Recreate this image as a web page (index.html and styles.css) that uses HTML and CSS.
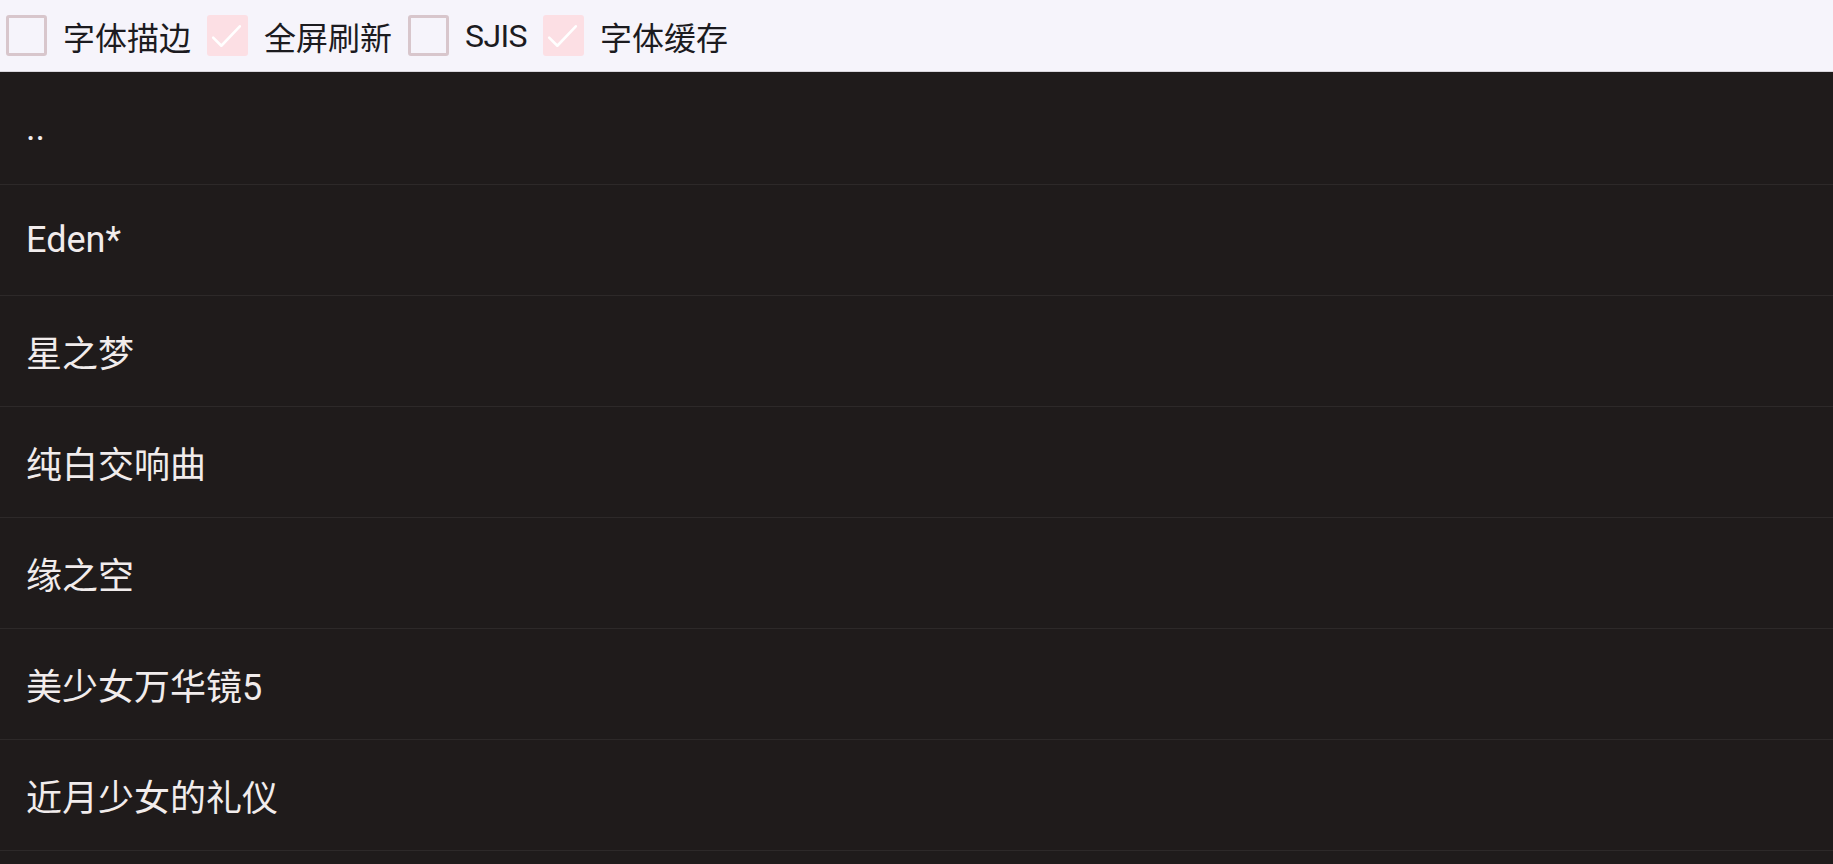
FILE: index.html
```html
<!DOCTYPE html>
<html lang="zh-CN">
<head>
    <meta charset="UTF-8">
    <meta name="viewport" content="width=device-width, initial-scale=1.0">
    <title>游戏列表</title>
    <link rel="stylesheet" href="styles.css">
</head>
<body>
    <div class="toolbar">
        <label class="option">
            <span class="box"></span>
            <span class="option-text">字体描边</span>
        </label>
        <label class="option">
            <span class="box checked">
                <svg viewBox="0 0 40 40"><path d="M6 22 L14 30 L32 11" /></svg>
            </span>
            <span class="option-text">全屏刷新</span>
        </label>
        <label class="option">
            <span class="box"></span>
            <span class="option-text latin">SJIS</span>
        </label>
        <label class="option">
            <span class="box checked">
                <svg viewBox="0 0 40 40"><path d="M6 22 L14 30 L32 11" /></svg>
            </span>
            <span class="option-text">字体缓存</span>
        </label>
    </div>

    <ul class="game-list">
        <li>..</li>
        <li>Eden*</li>
        <li>星之梦</li>
        <li>纯白交响曲</li>
        <li>缘之空</li>
        <li>美少女万华镜5</li>
        <li>近月少女的礼仪</li>
    </ul>
</body>
</html>
```

FILE: styles.css
```css
body {
    margin: 0;
    background-color: #1f1b1b;
    font-family: Roboto, "Noto Sans CJK SC", sans-serif;
    overflow: hidden;
}
.toolbar {
    height: 72px;
    background-color: #f6f4fb;
    display: flex;
    align-items: center;
    gap: 16px;
    padding-left: 6px;
    box-sizing: border-box;
    border-bottom: 1px solid #d9d6dc;
}
.option {
    display: flex;
    align-items: center;
    gap: 16px;
}
.box {
    width: 41px;
    height: 41px;
    box-sizing: border-box;
    border: 3px solid #d8c6cc;
    border-radius: 3px;
    display: flex;
}
.box.checked {
    border: none;
    background-color: #fcdfe4;
}
.box svg {
    width: 100%;
    height: 100%;
}
.box path {
    fill: none;
    stroke: #ffffff;
    stroke-width: 2.5;
    stroke-linecap: round;
    stroke-linejoin: round;
}
.option-text {
    font-size: 32px;
    color: #1c1b1f;
    margin-top: 1px;
}
.option-text.latin {
    letter-spacing: -0.6px;
}
.game-list {
    list-style: none;
    margin: 0;
    padding: 0;
}
.game-list li {
    height: 110px;
    border-bottom: 1px solid #2d2929;
    display: flex;
    align-items: center;
    padding-left: 26px;
    font-size: 36px;
    color: #f1ecec;
}
.game-list li:first-child {
    height: 112px;
}
```
